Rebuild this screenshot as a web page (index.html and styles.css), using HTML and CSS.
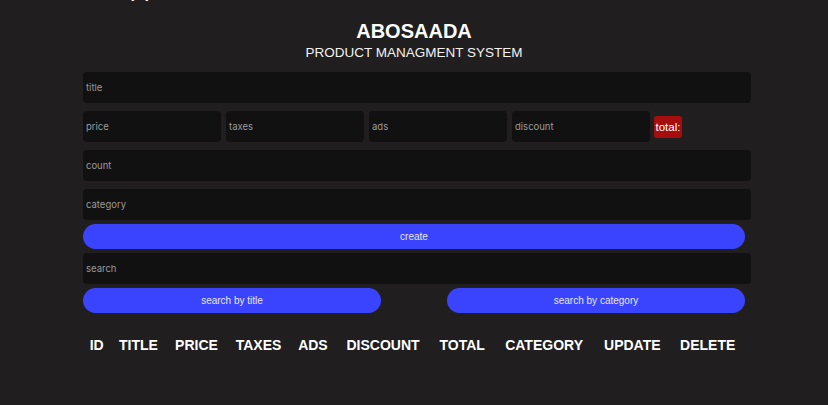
FILE: index.html
```html
<!DOCTYPE html>
<html>
<head>
<meta charset="utf-8">
<link rel="stylesheet" href="styles.css">
</head>
<body>
<div class="topcut">pp</div>
<div class="crud">
  <header class="head">
    <h2 class="brand">ABOSAADA</h2>
    <p class="sub">PRODUCT MANAGMENT SYSTEM</p>
  </header>
  <div class="inputs">
    <input class="field" type="text" placeholder="title">
    <div class="price">
      <input class="field small" type="number" placeholder="price">
      <input class="field small" type="number" placeholder="taxes">
      <input class="field small" type="number" placeholder="ads">
      <input class="field small" type="number" placeholder="discount">
      <small class="total">total:</small>
    </div>
    <input class="field" type="number" placeholder="count">
    <input class="field" type="text" placeholder="category">
    <button class="btn create">create</button>
  </div>
  <div class="outputs">
    <input class="field" type="text" placeholder="search">
    <div class="btnsearch">
      <button class="btn half">search by title</button>
      <button class="btn half">search by category</button>
    </div>
    <table class="tbl">
      <tr>
        <th>id</th><th>title</th><th>price</th><th>taxes</th><th>ads</th><th>discount</th><th>total</th><th>category</th><th>update</th><th>delete</th>
      </tr>
    </table>
  </div>
</div>
</body>
</html>
```
FILE: styles.css
```css
* { box-sizing: border-box; }
html, body {
  margin: 0;
  background: #201e1f;
  color: #fff;
  font-family: "Liberation Sans", Arial, sans-serif;
}
body { height: 405px; overflow: hidden; }
.topcut {
  font-size: 25px;
  line-height: 28px;
  margin-top: -27px;
  margin-left: 130px;
  color: #fff;
  height: 28px;
  overflow: hidden;
}
.crud {
  width: 668px;
  margin-left: 83px;
}
.head {
  text-align: center;
  margin-left: -6px;
}
.brand {
  margin: 19px 0 0 0;
  font-size: 20px;
  line-height: 23px;
  font-weight: bold;
}
.sub {
  margin: 0;
  font-size: 13.5px;
  line-height: 19px;
  color: #f2f2f2;
}
.inputs {
  margin-top: 10px;
  display: flex;
  flex-direction: column;
}
.field {
  display: block;
  width: 100%;
  height: 31px;
  border: none;
  outline: none;
  background: #111111;
  border-radius: 4px;
  color: #ddd;
  padding: 0 3px;
  font-family: Inter, "Noto Sans", sans-serif;
  font-size: 9.5px;
  margin: 0 0 8px 0;
  -moz-appearance: textfield;
}
.field::placeholder { color: #9a9a9a; }
.field::-webkit-inner-spin-button, .field::-webkit-outer-spin-button { -webkit-appearance: none; margin: 0; }
.price {
  display: flex;
  align-items: center;
  gap: 5px;
  margin-bottom: 8px;
}
.price .field.small {
  width: 138px;
  margin: 0;
}
.total {
  background: #a60e0e;
  color: #fff;
  font-size: 11.5px;
  font-family: "Liberation Sans", Arial, sans-serif;
  padding: 4px 1.5px;
  border-radius: 3px;
  margin-left: -1px;
  line-height: 14px;
}
.btn {
  display: block;
  border: none;
  background: #3a44ff;
  color: #e6e6ee;
  border-radius: 13px;
  height: 25px;
  font-family: "Liberation Sans", Arial, sans-serif;
  font-size: 10px;
  cursor: pointer;
}
.create {
  width: 662px;
  margin-top: -4px;
  margin-bottom: 4px;
}
.outputs .field { margin-bottom: 4px; }
.btnsearch {
  width: 662px;
  display: flex;
  justify-content: space-between;
}
.half { width: 298px; }
.tbl {
  margin-top: 20px;
  width: 662px;
  border-collapse: collapse;
}
.tbl th {
  text-transform: uppercase;
  font-size: 14px;
  font-weight: bold;
  padding: 4px 5px;
  text-align: center;
}
```
